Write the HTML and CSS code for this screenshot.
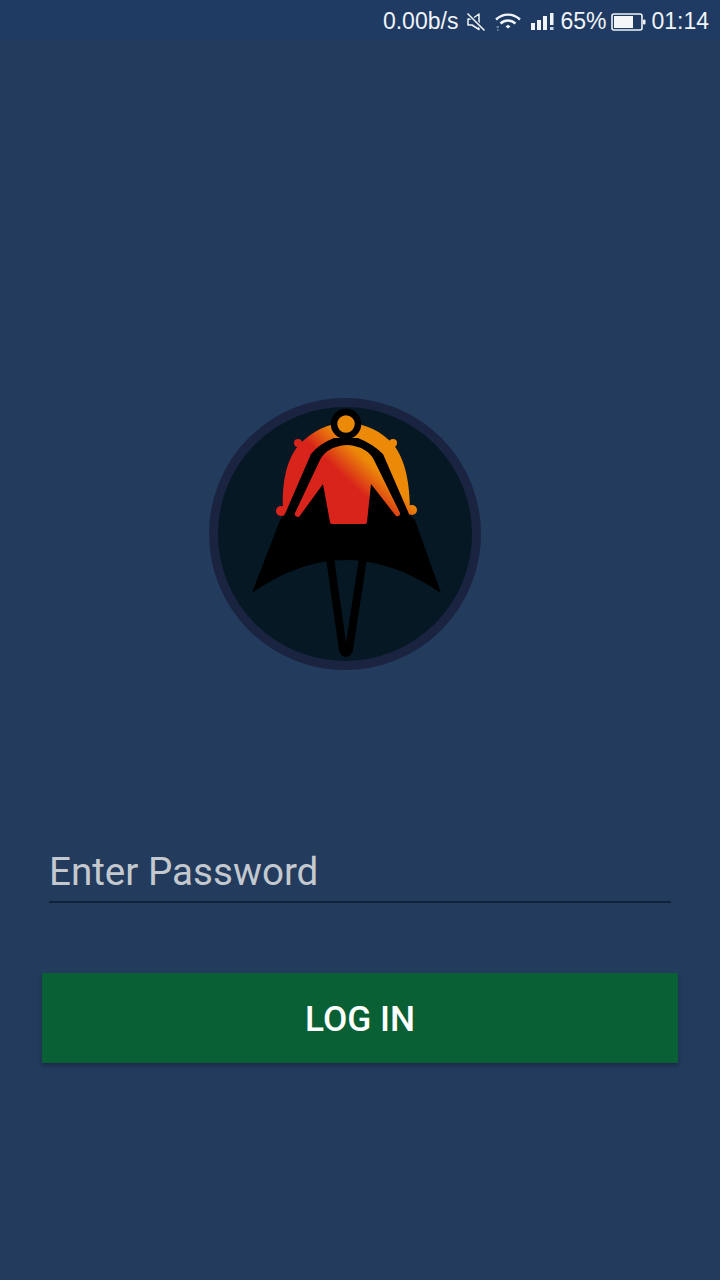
FILE: index.html
```html
<!DOCTYPE html>
<html lang="en">
<head>
<meta charset="utf-8">
<title>Log in</title>
<link rel="stylesheet" href="styles.css">
</head>
<body>
<div class="screen">
  <header class="status">
    <span class="speed">0.00b/s</span>
    <svg class="ic-mute" viewBox="0 0 20 20" width="20" height="20"><path d="M2 7h4l7-5v15.500L6 13H2z" fill="none" stroke="#f1f4f7" stroke-width="1.500" stroke-linejoin="round"/><path d="M1.500 1.500 18.500 18.500" stroke="#1f3a63" stroke-width="3.500"/><path d="M1.500 1.500 18.500 18.500" stroke="#f1f4f7" stroke-width="1.600"/></svg>
    <svg class="ic-wifi" viewBox="0 0 26 20" width="26" height="20"><path d="M1 7.500C8 1 18 1 25 7.500" fill="none" stroke="#f1f4f7" stroke-width="2.400"/><path d="M5.500 11.500C10 7.500 16 7.500 20.500 11.500" fill="none" stroke="#f1f4f7" stroke-width="2.400"/><path d="M10.500 14.500L13 12.800l2.500 1.700-2.500 2z" fill="#f1f4f7"/><path d="M1.500 15h2.500M2 18h1.500" stroke="#a9bad0" stroke-width="1.200"/></svg>
    <svg class="ic-signal" viewBox="0 0 23 20" width="23" height="20"><rect x="0" y="11" width="4" height="7" fill="#f1f4f7"/><rect x="6" y="8" width="4" height="10" fill="#f1f4f7"/><rect x="12" y="4" width="4" height="14" fill="#f1f4f7"/><rect x="19" y="1" width="3.500" height="12" fill="#f1f4f7"/><rect x="19" y="15" width="3.500" height="3" fill="#c9d4e2"/></svg>
    <span class="batt-pct">65%</span>
    <svg class="ic-batt" viewBox="0 0 35 18" width="35" height="18"><rect x="1" y="1" width="30" height="16" rx="2" fill="none" stroke="#f1f4f7" stroke-width="1.600"/><rect x="3" y="3" width="19" height="12" fill="#f4f6f8"/><rect x="32" y="6.500" width="2.500" height="5" rx="1" fill="#f1f4f7"/></svg>
    <span class="clock">01:14</span>
  </header>

  <main class="content">
    <svg class="logo" viewBox="0 0 290 290" width="290" height="290" role="img" aria-label="Logo">
      <defs>
        <linearGradient id="sun" gradientUnits="userSpaceOnUse" x1="160" y1="64" x2="141" y2="84">
          <stop offset="0" stop-color="#ec8a08"/>
          <stop offset="1" stop-color="#d8241a"/>
        </linearGradient>
      </defs>
      <circle cx="145" cy="144" r="131.500" fill="#051824" stroke="#1a2340" stroke-width="9"/>
      <path d="M83 122C82 100 84 72 99 55C112 41 128 33 146 33C166 33 182 42 193 54C206 70 210 95 210 122L210 126L83 126Z" fill="url(#sun)"/>
      <circle cx="81" cy="121" r="5" fill="url(#sun)"/>
      <circle cx="212" cy="120" r="5" fill="url(#sun)"/>
      <circle cx="98" cy="53" r="4" fill="url(#sun)"/>
      <circle cx="193" cy="53" r="4" fill="url(#sun)"/>
      <path d="M52 203L80 130L85 124L111 64Q119 54 134 48L158 48Q173 54 183 64L209 124L215 130L241 203C210 182 178 170 146 170C114 170 82 182 52 203Z" fill="#000"/>
      <path d="M95 123L120 70C124 62 132 56 147 55C162 56 170 62 174 70L200 123Q200 127 196 126L171 94L167 132Q167 134 165 134L132 134Q130 134 130 132L123 94L99 127Q94 127 95 123Z" fill="url(#sun)"/>
      <path d="M130 168L143 260Q146 266 149 260L163 168" fill="none" stroke="#000" stroke-width="8" stroke-linejoin="round"/>
      <circle cx="146" cy="34" r="12" fill="#ec8a08" stroke="#000" stroke-width="6.500"/>
    </svg>

    <div class="field">
      <span class="placeholder">Enter Password</span>
    </div>
    <button class="login" type="button">LOG IN</button>
  </main>
</div>
</body>
</html>
```
FILE: styles.css
```css
* { box-sizing: border-box; }
html, body { margin: 0; padding: 0; }
body { width: 720px; height: 1280px; overflow: hidden; background: #233b5d; }
.screen { width: 720px; height: 1280px; display: flex; flex-direction: column; background: #233b5d; }
.status {
  height: 40px;
  background: #1f3a63;
  display: flex;
  align-items: center;
  justify-content: flex-end;
  padding: 3px 11px 0 0;
  font-family: "Liberation Sans", Arial, sans-serif;
  font-size: 23px;
  color: #f1f4f7;
  line-height: 1;
}
.speed { margin-right: 8px; }
.ic-mute { margin-right: 9px; }
.ic-wifi { margin-right: 10px; }
.ic-signal { margin-right: 6px; }
.ic-batt { margin-left: 5px; margin-right: 5px; }
.content { display: flex; flex-direction: column; flex: 1; }
.logo { margin: 350px 0 0 200px; display: block; }
.field {
  margin: 160px 49px 0;
  height: 63px;
  padding-top: 3px;
  border-bottom: 2px solid #0f2438;
  display: flex;
  align-items: center;
}
.placeholder {
  font-family: Roboto, sans-serif;
  font-size: 38.600px;
  color: #c3c9cf;
  line-height: 1;
}
.login {
  margin: 70px 42px 0;
  height: 90px;
  padding: 2px 0 0;
  border: 0;
  background: #0a6035;
  color: #fff;
  font-family: Roboto, sans-serif;
  font-weight: 500;
  font-size: 35.300px;
  box-shadow: 0 3px 4px rgba(10, 20, 40, 0.4);
}
```
